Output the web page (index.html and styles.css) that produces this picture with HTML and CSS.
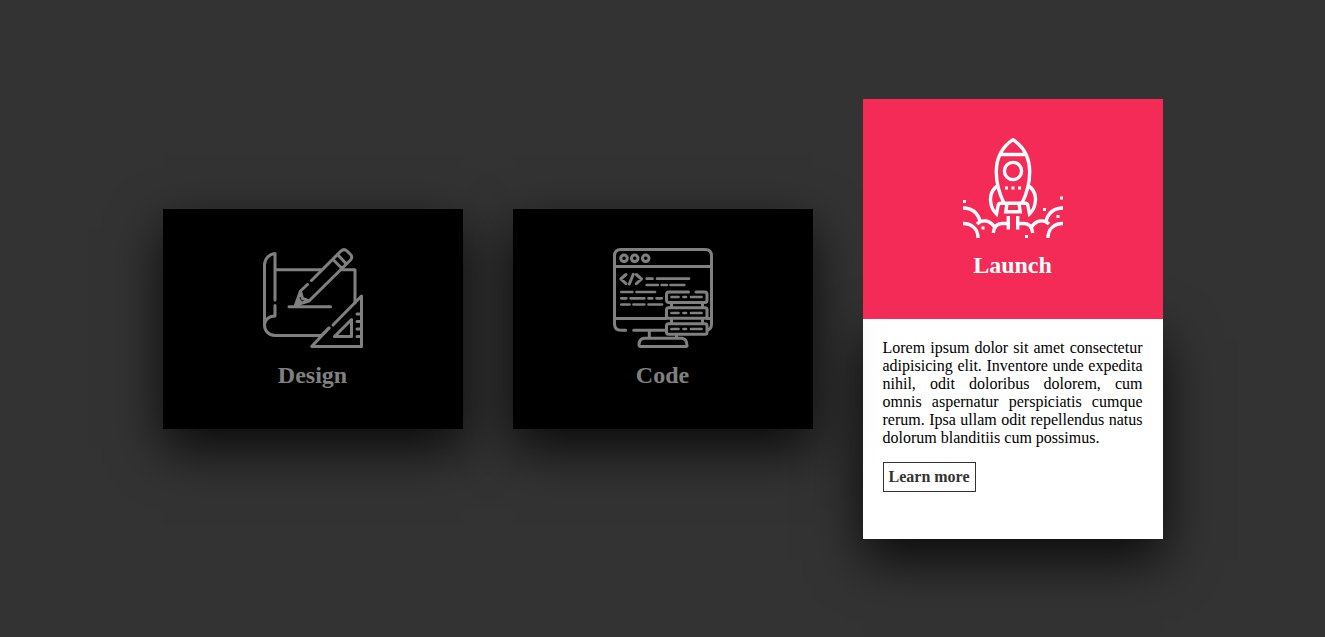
FILE: index.html
```html
<!DOCTYPE html>
<html lang="en">
<head>
<meta charset="utf-8">
<meta name="viewport" content="width=device-width, initial-scale=1">
<title>Services</title>
<link rel="stylesheet" href="styles.css">
</head>
<body>
<main class="cards">
  <article class="card">
    <div class="face face-title">
      <svg class="icon" viewBox="0 0 100 100" aria-hidden="true">
        <path d="M12 52V5.500C6 6 1.500 11 1.500 17V77C1.500 83.500 6.500 87.500 12 87.500H58.500L66 80M12 57.500V68C6 68 1.500 72 1.500 77M12 21.700H58M78 21.700H92V55"/>
        <path d="M66 80L48.700 98.500H98.500V48L70 77M94 66H98M94 73.500H98M94 81H98M94 88.500H98M88.500 71.500V88.500H71.500Z"/>
        <path d="M48.500 32.500L78 3Q81 .2 84 3L87.500 6.500Q90 9 87.500 12L46 53L32.500 57L37.500 43L44.500 36.500M38 45L39.500 50.500L46 53M70.500 12L78.500 20M75.500 7.500L83 15.500M26 58.700H67.500M33.500 56L35.500 51L38 54.500Z"/>
      </svg>
      <h3 class="title">Design</h3>
    </div>
  </article>

  <article class="card">
    <div class="face face-title">
      <svg class="icon" viewBox="0 0 100 100" aria-hidden="true">
        <path d="M12.700 82.300H8Q1.500 82.300 1.500 76V8Q1.500 1.500 8 1.500H92Q98.500 1.500 98.500 8V76Q98.500 81 94.500 82M20.700 82.300H53M1.500 18.500H98.500M1.500 70.500H53M94 70.500H98.500"/>
        <circle cx="11" cy="10.300" r="3.300"/><circle cx="21.700" cy="10.300" r="3.300"/><circle cx="32.700" cy="10.300" r="3.300"/>
        <path d="M13 26.500L7.800 31L13 35.700M20.300 26.300L16.300 36M23.300 26.500L28.500 31L23.300 35.700"/>
        <path class="code-lines" d="M33.700 30.700H39.500M44 30.700H76M33.700 37H44.700M48.700 37H54M57.500 37H71.300M8.300 44H19.300M23.500 44H42M8.300 50.300H13.300M17.700 50.300H31.300M35.500 50.300H39.300M43.500 50.300H48.700M8.300 56.500H16.500M20.500 56.500H31.300M35.500 56.500H49M58.500 49H65.500M70.500 49H73M78 49H88.500M58.500 65H65.500M70.500 65H73M78 65H88.500M58.500 81H65.500M70.500 81H73M78 81H88.500"/>
        <path d="M75.500 44H56Q53.500 44 53.500 46.500V52Q53.500 54.500 56 54.500H91.500Q94 54.500 94 52V46.500Q94 44 91.500 44H83M58.500 54.500V59.500M89.500 54.500V59.500M58.500 70.500V75.500M89.500 70.500V75.500"/>
        <rect x="53.500" y="59.700" width="40.500" height="10.600" rx="2"/><rect x="53.500" y="75.700" width="40.500" height="10.600" rx="2"/>
        <path d="M36.300 82.300V90M63.500 86.500V90M31 90.300H69Q74 91 74 98Q73.500 98.600 72 98.600H28Q26 98.600 26 97Q26 91 31 90.300Z"/>
      </svg>
      <h3 class="title">Code</h3>
    </div>
  </article>

  <article class="card card-open">
    <div class="face face-title">
      <svg class="icon icon-rocket" viewBox="0 0 100 100" aria-hidden="true">
        <path d="M41 65.200C36 55 33.300 44 33.300 34C33.300 21 39 9 50 1.700C61 9 66.700 21 66.700 34C66.700 44 64 55 59 65.200M37 16.500H63"/>
        <circle cx="50" cy="33" r="8.600"/>
        <path d="M35.500 47C28 52 27 58 27.600 63C28 69 30.300 73 33.500 76L35 68Q35.300 65.200 38 65.200H62Q64.700 65.200 65 68L66.500 76C69.700 73 72 69 72.400 63C73 58 72 52 64.500 47"/>
        <path d="M44 65.200L42.800 73.700H57.200L56 65.200"/>
        <path d="M0 70C9 70 15 75 17.300 84M0 85.500C9 85.500 15 91 15 100M14 86C19 81 27 82 31.500 89M30.300 95C31 89 34 85.500 39 85.500H45.300M45.300 78V91.500"/>
        <path d="M100 70C91 70 85 75 82.700 84M100 85.500C91 85.500 85 91 85 100M86 86C81 81 73 82 68.500 89M69.700 95C69 89 66 85.500 61 85.500H54.700M54.700 78V91.500"/>
        <path class="sparks" d="M42 48.500h3v3h-3zM48.500 48.500h3v3h-3zM55 48.500h3v3h-3zM0 62h3v3h-3zM18.500 88.500h3v3h-3zM97 58.500h3v3h-3zM80 70h3v3h-3zM93.500 77h3v3h-3zM62 97h3v3h-3z"/>
      </svg>
      <h3 class="title">Launch</h3>
    </div>
    <div class="face face-details">
      <p class="text">Lorem ipsum dolor sit amet consectetur adipisicing elit. Inventore unde expedita nihil, odit doloribus dolorem, cum omnis aspernatur perspiciatis cumque rerum. Ipsa ullam odit repellendus natus dolorum blanditiis cum possimus.</p>
      <a class="more" href="#">Learn more</a>
    </div>
  </article>
</main>
</body>
</html>
```
FILE: styles.css
```css
* {
  box-sizing: border-box;
}

body {
  margin: 0;
  min-height: 100vh;
  display: flex;
  align-items: center;
  justify-content: center;
  background: #333;
  font-family: "Liberation Serif", "Times New Roman", serif;
  font-size: 16px;
}

.cards {
  width: 100%;
  max-width: 1000px;
  display: flex;
  flex-wrap: wrap;
  gap: 50px;
  align-items: center;
  justify-content: center;
}

.card {
  flex: 0 1 300px;
  min-width: 0;
}

.face {
  min-height: 220px;
}

.face-title {
  position: relative;
  z-index: 1;
  display: flex;
  flex-direction: column;
  align-items: center;
  justify-content: center;
  gap: 14px;
  background: #000;
  color: #808080;
  box-shadow: 0 20px 50px rgba(0, 0, 0, 0.8);
}

.card-open .face-title {
  background: #f32b56;
  color: #fff;
  box-shadow: none;
}

.face-details {
  padding: 20px;
  background: #fff;
  box-shadow: 0 20px 50px rgba(0, 0, 0, 0.8);
}

.icon {
  width: 100px;
  height: 100px;
  fill: none;
  stroke: currentColor;
  stroke-width: 3;
  stroke-linecap: round;
  stroke-linejoin: round;
}

.icon-rocket {
  stroke-width: 3.4;
  stroke-linecap: butt;
  stroke-linejoin: miter;
}

.code-lines {
  stroke-width: 2.7;
}

.sparks {
  fill: currentColor;
  stroke: none;
}

.title {
  margin: 0;
  font-size: 24px;
  line-height: 27px;
}

.text {
  margin: 0;
  line-height: 18px;
  text-align: justify;
}

.more {
  display: inline-block;
  margin-top: 15px;
  padding: 5px;
  border: 1px solid #333;
  color: #333;
  font-weight: 700;
  line-height: 18px;
  text-decoration: none;
}

.more:hover {
  background: #333;
  color: #fff;
}
```
